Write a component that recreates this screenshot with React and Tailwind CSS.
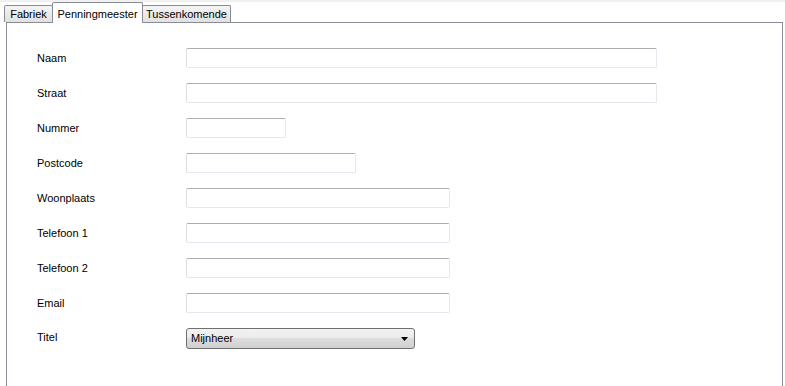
import React from "react";

const fields = [
  { label: "Naam", w: "w-[471px]" },
  { label: "Straat", w: "w-[471px]" },
  { label: "Nummer", w: "w-[100px]" },
  { label: "Postcode", w: "w-[170px]" },
  { label: "Woonplaats", w: "w-[264px]" },
  { label: "Telefoon 1", w: "w-[264px]" },
  { label: "Telefoon 2", w: "w-[264px]" },
  { label: "Email", w: "w-[264px]" },
];

const TextBox = ({ w }) => (
  <div
    className={`${w} h-[20px] rounded-[2px] border border-t-[#abadb3] border-l-[#dbdfe6] border-r-[#e3e9ef] border-b-[#e3e9ef] bg-white`}
  />
);

const App = () => {
  return (
    <div className="w-[785px] h-[386px] bg-white overflow-hidden text-[11px] text-black font-['Liberation_Sans',Arial,sans-serif]">
      <div className="h-[2px] bg-[#f0f0f0]" />
      <div className="flex items-end h-[20px] pl-[4px]">
        <div className="w-[49px] h-[17px] flex items-center justify-center border border-b-0 border-[#898c95] bg-gradient-to-b from-[#f4f4f4] to-[#e1e1e1] rounded-t-[2px]">
          Fabriek
        </div>
        <div className="relative z-10 -mb-px w-[91px] h-[21px] flex items-start justify-center pt-[3px] border border-b-0 border-[#898c95] bg-white rounded-t-[2px] -ml-px">
          Penningmeester
        </div>
        <div className="w-[89px] h-[17px] flex items-center justify-center border border-b-0 border-[#898c95] bg-gradient-to-b from-[#f4f4f4] to-[#e1e1e1] rounded-t-[2px] -ml-px">
          Tussenkomende
        </div>
      </div>
      <div className="ml-[6px] w-[777px] h-[364px] border border-b-0 border-[#898c95] pl-[30px] pt-[25px] flex flex-col gap-[15px]">
        {fields.map((f) => (
          <div key={f.label} className="flex items-center">
            <div className="w-[149px]">{f.label}</div>
            <TextBox w={f.w} />
          </div>
        ))}
        <div className="flex items-center">
          <div className="w-[149px] -mt-[2px]">Titel</div>
          <div className="w-[229px] h-[21px] flex items-center justify-between px-[4px] rounded-[3px] border border-[#707070] bg-[linear-gradient(to_bottom,#f2f2f2_0%,#ebebeb_50%,#dddddd_50%,#cfcfcf_100%)]">
            <span>Mijnheer</span>
            <svg width="7" height="4" viewBox="0 0 7 4" className="mr-[2px]">
              <path d="M0 0h7L3.5 4z" fill="#000" />
            </svg>
          </div>
        </div>
      </div>
    </div>
  );
};

export default App;
